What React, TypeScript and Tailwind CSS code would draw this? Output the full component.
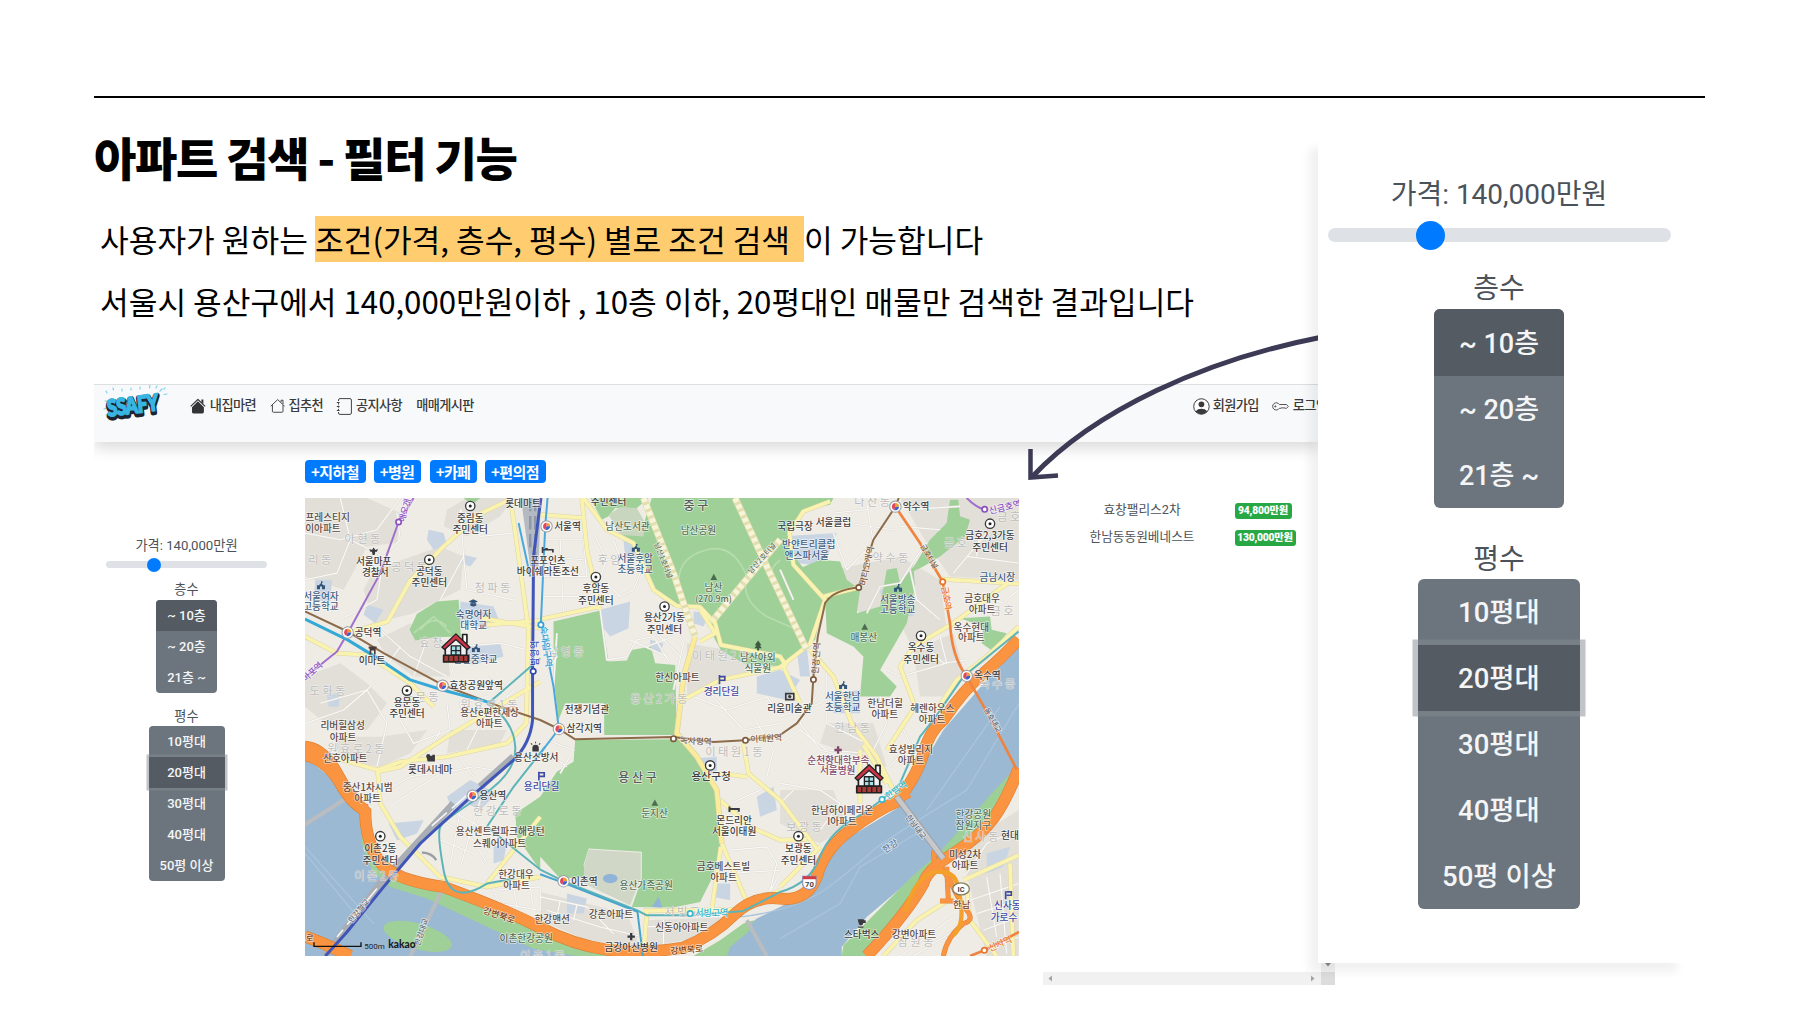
import React from "react";

const KR = "font-['Noto_Sans_CJK_KR',sans-serif]";
const UI = "font-['Roboto','Noto_Sans_CJK_KR',sans-serif]";

/* ---------- filter controls ---------- */

const FLOORS = ["~ 10층", "~ 20층", "21층 ~"];
const SIZES = ["10평대", "20평대", "30평대", "40평대", "50평 이상"];

function SmallFilter() {
  return (
    <div className={`${UI} flex w-[186px] flex-col items-center text-[13.2px] text-[#4b5259]`}>
      <div className="mt-[76px] h-5 leading-5">가격: 140,000만원</div>
      <div className="relative mt-[5px] h-[7px] w-[161px] rounded-full bg-[#dee2e6]">
        <div className="absolute -top-[3.5px] left-[41px] size-[14px] rounded-full bg-[#007bff]" />
      </div>
      <div className="mt-[12px] h-5 leading-5">층수</div>
      <div className="flex h-[93px] w-[61px] flex-col overflow-hidden rounded-[4px] bg-[#6c757d] text-[13px] font-medium text-[#f4f5f6]">
        {FLOORS.map((t, i) => (
          <div key={t} className={`flex flex-1 items-center justify-center ${i === 0 ? "bg-[#545b62]" : ""}`}>{t}</div>
        ))}
      </div>
      <div className="mt-[14px] h-5 leading-5">평수</div>
      <div className="-mt-[1px] flex h-[155px] w-[76px] flex-col rounded-[4px] bg-[#6c757d] text-[13px] font-medium text-[#f4f5f6]">
        {SIZES.map((t, i) => (
          <div key={t} className={`flex flex-1 items-center justify-center ${i === 1 ? "bg-[#545b62] shadow-[0_0_0_2.5px_rgba(130,138,145,0.5)]" : ""}`}>{t}</div>
        ))}
      </div>
    </div>
  );
}

function LargeFilter() {
  return (
    <div className={`${UI} flex w-[362px] flex-col items-center text-[28px] text-[#4b5259]`}>
      <div className="mt-[36px] h-10 leading-10">가격: 140,000만원</div>
      <div className="relative mt-[13px] h-[14px] w-[343px] rounded-full bg-[#dee2e6]">
        <div className="absolute -top-[7px] left-[88px] size-[29px] rounded-full bg-[#007bff]" />
      </div>
      <div className="mt-[27px] h-10 leading-10">층수</div>
      <div className="flex h-[199px] w-[130px] flex-col overflow-hidden rounded-[6px] bg-[#6c757d] text-[27px] font-medium text-[#f4f5f6]">
        {FLOORS.map((t, i) => (
          <div key={t} className={`flex items-center justify-center pt-[3px] ${i === 0 ? "h-[67px] bg-[#545b62]" : "h-[66px]"}`}>{t}</div>
        ))}
      </div>
      <div className="mt-[32px] h-10 leading-10">평수</div>
      <div className="-mt-[1px] flex h-[330px] w-[162px] flex-col rounded-[6px] bg-[#6c757d] text-[27.5px] font-medium text-[#f4f5f6]">
        {SIZES.map((t, i) => (
          <div key={t} className={`flex flex-1 items-center justify-center pt-[2px] ${i === 1 ? "bg-[#545b62] shadow-[0_0_0_5.5px_rgba(130,138,145,0.5)]" : ""}`}>{t}</div>
        ))}
      </div>
    </div>
  );
}

/* ---------- navigation bar ---------- */

function SsafyLogo() {
  return (
    <svg width="66" height="36" viewBox="0 0 66 36">
      <g stroke="#7fd3ee" strokeWidth="1.2" strokeLinecap="round">
        <path d="M3 6l1 2M10 3l.6 2M19 4v2M28 3v2M37 2v2M47 0l-.5 3M54 1l-1 2M59 4l-2 2M64 9l-3 .5M2 16h2M1 24l2-1M62 3l-1 1M3 30l2-1" />
      </g>
      <g transform="rotate(-7 33 20)" fontFamily="Lato, sans-serif" fontWeight="900" fontSize="23">
        <text x="4" y="30" textLength="51" lengthAdjust="spacingAndGlyphs" fill="#1d2530" stroke="#1d2530" strokeWidth="5" strokeLinejoin="round">SSAFY</text>
        <text x="4" y="28" textLength="51" lengthAdjust="spacingAndGlyphs" fill="#38b6e3" stroke="#38b6e3" strokeWidth="1.8" strokeLinejoin="round">SSAFY</text>
      </g>
    </svg>
  );
}

const HouseFill = () => (
  <svg width="16" height="16" viewBox="0 0 16 16" fill="#343434">
    <path d="M8 3.300l6 6V14a1.500 1.500 0 0 1-1.500 1.500h-9A1.500 1.500 0 0 1 2 14V9.300z" />
    <path d="M7.300 1.100a1 1 0 0 1 1.400 0l7 6.800-.8.8L8 2.100 1.100 8.700l-.8-.8zM11.500 1.500h2v4.200l-2-2z" />
  </svg>
);
const HouseOutline = () => (
  <svg width="16" height="16" viewBox="0 0 16 16" fill="none" stroke="#444" strokeWidth="1">
    <path d="M2.500 7v6.500a1 1 0 0 0 1 1h9a1 1 0 0 0 1-1V7M.8 8.200L8 1.300l7.200 6.900M11.500 4V2h2v4" />
  </svg>
);
const Journal = () => (
  <svg width="16" height="17" viewBox="0 0 16 17" fill="none" stroke="#444">
    <path d="M2.500 3V2A1.500 1.500 0 0 1 4 .6h10A1.500 1.500 0 0 1 15.400 2v13A1.500 1.500 0 0 1 14 16.400H4A1.500 1.500 0 0 1 2.500 15v-1" />
    <path d="M2.500 4.500v8" strokeDasharray="2 1.200" />
    <path d="M.8 4.500h2.800M.8 8.500h2.800M.8 12.500h2.800" />
  </svg>
);
const Person = () => (
  <svg width="17" height="17" viewBox="0 0 17 17">
    <circle cx="8.500" cy="8.500" r="7.800" fill="#fff" stroke="#3a3a3a" strokeWidth="1" />
    <circle cx="8.500" cy="6.300" r="2.900" fill="#3a3a3a" />
    <path d="M2.800 13.500C4 11.300 6 10.700 8.500 10.700s4.500.6 5.700 2.800A7.600 7.600 0 0 1 8.500 16.200a7.600 7.600 0 0 1-5.700-2.700z" fill="#3a3a3a" />
  </svg>
);
const KeyIcon = () => (
  <svg width="17" height="9" viewBox="0 0 17 9" fill="none" stroke="#555">
    <path d="M7.300 2.500H14.500L16.300 4.500 14.500 6.300H13l-1-.8-1 .8-1-.8-1 .8H7.300A3.600 3.600 0 1 1 7.300 2.500z" />
    <circle cx="3.300" cy="4.400" r=".6" fill="#555" />
  </svg>
);

function NavBar() {
  return (
    <div className={`${UI} flex h-[58px] w-full items-start border-t border-[#dcdee0] bg-[#f8f9fb] text-[13.2px] font-medium tracking-[-0.6px] text-[#3a3a3a] shadow-[0_6px_14px_rgba(0,0,0,0.15)]`}>
      <div className="ml-[9px]"><SsafyLogo /></div>
      <div className="ml-[21px] mt-[11px] flex h-5 w-[66px] items-center gap-[4px] whitespace-nowrap"><HouseFill />내집마련</div>
      <div className="ml-[14px] mt-[11px] flex h-5 w-[53px] items-center gap-[3px] whitespace-nowrap"><HouseOutline />집추천</div>
      <div className="ml-[13px] mt-[11px] flex h-5 w-[67px] items-center gap-[4px] whitespace-nowrap"><Journal />공지사항</div>
      <div className="ml-[14px] mt-[11px] h-5 w-[60px] whitespace-nowrap leading-5">매매게시판</div>
      <div className="ml-[719px] mt-[11px] flex h-5 w-[66px] items-center gap-[3px] whitespace-nowrap"><Person />회원가입</div>
      <div className="ml-[13px] mt-[11px] flex h-5 items-center gap-[4px] whitespace-nowrap"><KeyIcon />로그인</div>
    </div>
  );
}

/* ---------- map ---------- */

const INK = "#3c3c40";
const APT = "#5a4a44";
const SCH = "#3f5d80";
const NAVY = "#3f49a5";
const GRN = "#54705a";

type Label = [number, number, string, string?, number?];

const LABELS: Label[] = [
  [82, 84, "프레스티지", APT], [68, 118, "이아파트", APT],
  [220, 217, "서울마포"], [225, 248, "경찰서"], [387, 245, "공덕동"], [387, 280, "주민센터"],
  [510, 86, "중림동"], [510, 121, "주민센터"], [668, 42, "롯데마트"],
  [62, 320, "서울여자", SCH], [62, 352, "고등학교", SCH],
  [520, 375, "숙명여자", SCH], [520, 407, "대학교", SCH], [525, 510, "선린중학교", SCH],
  [203, 428, "공덕역"], [215, 512, "이마트"], [528, 587, "효창공원앞역"],
  [320, 638, "용문동"], [320, 672, "주민센터"], [568, 668, "용산e편한세상", APT], [567, 700, "아파트", APT],
  [127, 708, "리버힐삼성", APT], [128, 744, "아파트", APT],
  [743, 212, "포포인츠"], [743, 245, "바이쉐라톤조선"], [802, 110, "서울역"],
  [925, 36, "주민센터"], [982, 110, "남산도서관", GRN], [1187, 50, "중 구", "#5a5a5a", 36], [1195, 123, "남산공원", GRN],
  [1005, 208, "서울후암", SCH], [1005, 240, "초등학교", SCH], [887, 298, "후암동"], [887, 332, "주민센터"],
  [1240, 294, "남산", GRN], [1240, 326, "(270.9m)", GRN, 26], [1093, 385, "용산2가동"], [1093, 418, "주민센터"],
  [1373, 503, "남산야외", GRN], [1373, 535, "식물원", GRN], [1132, 562, "한신아파트", APT], [1264, 606, "경리단길", NAVY],
  [860, 660, "전쟁기념관"], [852, 717, "삼각지역"], [1468, 657, "리움미술관"],
  [1848, 50, "약수역"], [1485, 112, "국립극장"], [1600, 100, "서울클럽"], [1526, 165, "반얀트리클럽", SCH], [1520, 199, "앤스파서울", SCH],
  [2070, 138, "금호2,3가동"], [2070, 175, "주민센터"], [2092, 264, "금남시장", SCH],
  [1793, 330, "서울방송", SCH], [1793, 360, "고등학교", SCH], [1691, 444, "매봉산", GRN],
  [2046, 326, "금호대우", APT], [2046, 360, "아파트", APT], [2014, 412, "옥수현대", APT], [2014, 444, "아파트", APT],
  [1863, 474, "옥수동"], [1863, 510, "주민센터"], [2062, 558, "옥수역"],
  [1628, 620, "서울한남", SCH], [1628, 652, "초등학교", SCH], [1755, 640, "한남더힐", APT], [1754, 673, "아파트", APT],
  [1897, 656, "헤렌하우스", APT], [1896, 690, "아파트", APT],
  [135, 805, "산호아파트", APT], [202, 892, "중산1차시범", APT], [202, 925, "아파트", APT], [390, 840, "롯데시네마"],
  [708, 803, "용산소방서"], [578, 917, "용산역"], [724, 890, "용리단길", NAVY],
  [600, 1026, "용산센트럴파크해링턴", APT], [598, 1060, "스퀘어아파트", APT], [240, 1075, "이촌2동"], [240, 1110, "주민센터"],
  [647, 1152, "한강대우", APT], [649, 1185, "아파트", APT], [678, 1344, "이촌한강공원", GRN], [756, 1287, "한강맨션", APT],
  [1233, 861, "용산구청", INK, 32], [1012, 865, "용 산 구", "#5a5a5a", 36], [1063, 971, "둔지산", GRN],
  [1302, 992, "몬드리안"], [1302, 1026, "서울이태원"], [1270, 1129, "금호베스트빌", APT], [1270, 1162, "아파트", APT],
  [852, 1173, "이촌역"], [1038, 1187, "용산가족공원", GRN], [932, 1274, "강촌아파트", APT], [1235, 1268, "서빙고역", "#35b5cc", 27],
  [1145, 1313, "신동아아파트", APT], [993, 1372, "금강아산병원"],
  [1833, 780, "효성빌리지", APT], [1833, 812, "아파트", APT], [1615, 812, "순천향대학부속", "#81476b"], [1613, 842, "서울병원", "#81476b"],
  [1626, 963, "한남하이페리온", APT], [1626, 995, "I아파트", APT], [1495, 1075, "보광동"], [1495, 1110, "주민센터"],
  [2020, 975, "한강공원", GRN], [2020, 1008, "잠원지구", GRN], [2130, 1036, "현대"], [1995, 1093, "미성2차", APT], [1995, 1126, "아파트", APT],
  [1985, 1242, "한남", "#7a4a30", 28], [2122, 1247, "신사동", NAVY], [2112, 1282, "가로수", NAVY],
  [1685, 1332, "스타벅스"], [1842, 1332, "강변아파트", APT],
];

const FAINT: [number, number, string][] = [
  [190, 148, "아현동"], [62, 210, "리동"], [330, 232, "공덕동"], [580, 294, "청파동"], [395, 458, "효창"], [85, 603, "도화동"],
  [930, 210, "후암"], [800, 486, "남영동"], [1265, 498, "이태원2동"], [1080, 626, "용산2가동"], [365, 622, "용문동"], [570, 645, "원효로1동"],
  [1720, 38, "다산동"], [1775, 204, "약수동"], [1970, 160, "금호"], [2110, 365, "금호"], [2095, 582, "옥수동"], [1660, 714, "한남동"], [2130, 82, "금호"],
  [170, 777, "원효로2동"], [595, 963, "한강로동"], [232, 1157, "이촌2동"], [1305, 785, "이태원1동"], [1150, 1264, "서빙고"],
  [1515, 1010, "보광동"], [2045, 1040, "신사동"], [1850, 1355, "잠원동"], [730, 1397, "이촌1동"],
];

const TURNED: [number, number, number, string, string, number][] = [
  [36, 545, -42, "마포역", "#8a4fc0", 26], [316, 50, -75, "애오개역", "#8a4fc0", 26],
  [704, 490, -90, "남영역", "#2f4bb5", 27], [738, 470, 82, "숙대입구역", "#2f9fd8", 27],
  [1090, 212, 68, "남산1호터널", "#6b7355", 22], [1385, 205, -48, "남산2호터널", "#6b7355", 22],
  [1700, 228, -78, "버티고개역", "#7d5a3c", 26], [2115, 52, -14, "신금호역", "#8a4fc0", 27],
  [1888, 200, 60, "금호터널", "#6b5a3c", 22], [1940, 325, 80, "금호역", "#e8742c", 26],
  [1548, 505, -86, "한강진역", "#7d5a3c", 26], [2078, 690, 60, "동호대교", "#5d6a78", 22],
  [597, 1275, 18, "강변북로", "#7a4413", 27], [363, 1325, -72, "한강대교", "#5d6a78", 23], [175, 1262, -50, "한강철교", "#5d6a78", 23],
  [1187, 753, 3, "녹사평역", "#7d5a3c", 26], [1398, 745, -4, "이태원역", "#7d5a3c", 26], [1160, 1378, -5, "강변북로", "#7a4413", 27],
  [1788, 900, -35, "한남역", "#35b5cc", 27], [1848, 1010, 53, "한남대교", "#5d6a78", 23], [1770, 1068, -35, "한강", "#5878a0", 27],
  [2100, 1360, -24, "신사역", "#e8742c", 27], [28, 1343, 8, "로", "#7a4413", 26],
];

const GRAY_BLOCKS = [
  "14,25 200,25 300,70 290,160 200,170 130,300 14,260",
  "220,240 420,170 490,200 480,300 420,330 340,370 220,400 190,300",
  "230,450 330,400 440,460 450,560 340,560 260,500",
  "14,560 120,520 200,580 260,640 200,720 100,720 14,650",
  "500,25 640,25 600,80 500,140 430,110 440,60",
  "1600,240 1800,200 1920,270 1940,420 1830,460 1800,400 1840,300 1700,380 1600,320",
  "1800,25 2156,25 2156,270 1950,260 1880,160",
  "1160,460 1400,500 1440,540 1280,560 1160,620",
  "720,1205 980,1270 1020,1370 860,1350 720,1290",
  "1040,1290 1300,1280 1210,1340 1040,1370",
  "1840,480 1960,430 1990,540 1940,620 1860,620",
  "1580,700 1720,700 1760,830 1560,760",
  "100,740 240,740 380,720 330,790 240,830 120,810",
  "450,720 620,720 600,760 440,790",
  "1980,1070 2156,960 2156,1397 2060,1397",
  "1440,900 1600,900 1640,1010 1560,1060 1440,1000",
];

const BLUE_BLOCKS = [
  "45,270 95,270 90,340 40,330", "200,345 250,360 225,400 190,375", "385,120 430,130 440,165 400,180 380,150",
  "490,195 530,205 510,230 485,220", "480,335 580,350 600,400 560,415 480,400", "470,470 600,460 610,500 520,525 440,500",
  "900,360 990,335 985,415 930,440 905,410", "970,150 1030,160 1020,210 975,205", "1180,365 1230,370 1210,410 1180,400",
  "1370,560 1440,540 1500,570 1460,630 1370,610", "1440,140 1610,130 1570,230 1460,215", "1740,300 1840,290 1840,380 1750,370",
  "1600,610 1680,600 1680,670 1600,670", "1370,920 1420,890 1430,960 1380,980", "1050,450 1090,460 1080,490 1050,480",
  "265,1000 370,990 350,1030 290,1050", "440,920 510,870 590,910 540,960 500,940 460,970", "80,615 120,610 115,650 85,650",
  "1490,480 1520,470 1530,560 1500,560", "800,1210 860,1225 850,1270 800,1270", "1240,1180 1290,1180 1290,1230 1240,1220",
  "1580,330 1640,330 1620,370 1580,370", "2060,1090 2130,1070 2110,1130 2060,1150", "580,1070 620,1060 610,1110 580,1120",
  "1180,805 1250,800 1250,850 1190,860",
];

const GREENS = [
  "490,25 540,25 515,45",
  "328,420 350,372 410,335 475,330 482,440 400,442 345,452",
  "870,25 1045,25 1010,55 945,55 925,80 905,90",
  "1040,70 1055,25 1310,25 1330,80 1370,130 1440,150 1440,25 1600,25 1590,45 1520,60 1475,100 1475,190 1560,300 1570,330 1545,450 1450,530 1330,520 1262,480 1240,440 1232,380 1180,345 1120,350 1078,320 1050,260 1020,180 960,130 1000,130 1030,110",
  "1300,25 1450,25 1450,170 1360,140",
  "1490,240 1560,210 1620,215 1640,270 1680,300 1670,370 1740,350 1760,240 1790,235 1800,280 1840,230 1845,290 1820,400 1740,540 1790,590 1770,620 1680,620 1690,500 1660,470 1580,430 1575,320",
  "1830,250 1890,150 1940,100 1950,30 1975,30 1980,80 2010,90 1995,140 1920,200 1870,230",
  "1980,385 2070,380 2075,420 2120,430 2080,485 2045,460 2050,410",
  "760,395 900,362 925,515 980,512 995,480 1052,470 1065,520 1125,525 1130,735 912,735 912,640 795,640 775,690 760,560",
  "825,750 1140,748 1180,800 1230,860 1258,950 1262,1075 1235,1165 1200,1235 1120,1252 995,1250 1025,1165 1025,1085 865,1075 850,1125 860,1160 780,1165 720,1100 720,1140 650,1040 645,970 720,920 770,845 820,815",
  "180,1000 230,1130 300,1165 420,1195 720,1310 820,1355 980,1397 830,1397 700,1375 540,1300 380,1225 270,1190 215,1140 185,1060",
  "1180,1397 1260,1350 1330,1300 1360,1290 1350,1320 1290,1370 1280,1397",
];

const YELLOW = [
  "M640 25L540 72L430 170L330 272L262 395L142 430", "M634 50L662 250L685 420L678 700L620 760L440 800L300 815L232 840L14 778",
  "M232 840L240 940L300 1040L420 1160L560 1190L720 1160", "M14 440L110 490L200 495L330 580L400 650", "M720 575L440 740L300 830L232 845",
  "M720 75L850 85M845 25L860 180L900 360", "M720 388L900 350M545 385L720 415M560 405L720 392",
  "M850 25L920 120L1000 160L1060 300L1130 348L1200 352L1245 400L1262 465L1440 500L1460 530",
  "M1200 360L1245 430L1200 455", "M1130 640L1260 570L1440 532L1530 462L1575 330L1480 225L1468 130L1510 65L1590 35",
  "M1570 320L1680 292", "M1530 480L1600 560L1655 700L1730 800L1790 920", "M1925 268L2156 282",
  "M2130 275L1960 400L1840 470L1800 530L1845 650L1760 780", "M1680 780L1680 940", "M2156 410L2060 500L1970 570L1910 660",
  "M1260 930L1350 1010L1440 1050L1520 1048", "M1330 760L1345 850L1440 930L1550 1075", "M1030 1262L1320 1258L1440 1200",
  "M1265 1060L1350 1258M1262 1070L1235 1258", "M1040 1265L1030 1397", "M1990 1170L2156 1095", "M2000 1200L2010 1290L2090 1397", "M1960 1220L1850 1290L1750 1397",
  "M1340 860L1260 850", "M720 980L560 1180", "M2130 1120L2140 1397", "M1560 1070L1440 1190", "M1690 765L1760 880", "M1450 530L1500 640",
];

const WHITE = [
  "M14 130L120 150L230 120L300 25", "M120 25L150 150L110 250L14 270", "M150 150L250 200L230 330L120 390", "M250 200L300 150L290 70",
  "M420 330L490 200L480 60L540 140L640 130", "M490 200L500 300L640 330", "M450 560L480 470L600 460L680 480", "M440 560L330 500L240 420",
  "M340 560L380 450M300 470L250 540", "M60 640L200 600L260 700L230 830", "M14 700L130 660L200 600L240 560", "M440 640L450 720L340 760L300 690",
  "M500 700L480 640L560 620M470 790L520 860M380 800L420 720", "M730 150L850 150L860 260L730 260M780 150L790 380M730 200L850 210M730 320L880 320",
  "M880 130L920 210L900 260L960 320L1000 300L1020 250", "M940 150L980 260M900 210L1000 210M900 360L920 510L980 500L1010 450L1060 440L1110 520",
  "M1140 440L1150 460L1120 600M1060 420L1140 500M1040 470L1120 440M990 450L1100 500", "M1180 620L1280 660L1400 620L1440 680L1560 640", "M1210 590L1330 720L1440 700",
  "M1440 240L1480 330M1600 130L1640 240L1720 160L1700 40M1640 100L1780 120M1600 70L1700 60L1720 25M1800 110L1920 120M1820 60L1980 50",
  "M1700 370L1740 290L1800 280L1850 200L1880 160M1830 240L1850 330L1920 390", "M2000 200L2156 220M2040 120L2030 200M1990 300L2110 340L2156 300M1960 250L2060 130",
  "M1920 440L1940 520L1800 560L1760 540M1890 480L1930 520L2000 510", "M1580 540L1580 700L1700 760M1740 620L1760 700L1720 780M1800 700L1830 760L1770 830M1560 600L1500 700L1560 780L1640 800",
  "M1440 760L1500 720L1580 780L1700 790M1360 680L1420 780L1400 860M1440 880L1560 900L1620 940L1560 1020M1440 940L1480 900",
  "M1290 1080L1400 1070L1430 1120L1410 1200M1290 940L1380 900M1280 1150L1440 1140M1320 1200L1400 1220L1440 1150",
  "M280 940L420 850L520 830L640 850M260 900L330 860L400 850M450 960L540 1010L600 1050M440 1000L520 1050L560 1120M420 1050L520 1090M480 960L450 1120M540 930L480 1130",
  "M580 1200L720 1190L720 1260L600 1240zM640 1190L650 1250M690 1190L700 1260M720 1220L860 1250L940 1330M740 1260L900 1310L1030 1340M780 1230L770 1280M830 1245L820 1290M1040 1310L1200 1300M1090 1290L1090 1370",
  "M2010 1230L2156 1180M2030 1270L2156 1230M2050 1320L2156 1280M2080 1370L2156 1340M2060 1160L2090 1340M2100 1150L2120 1390M1800 1397L1960 1280M1840 1397L1980 1310M2000 1150L2060 1060L2156 1020",
  "M760 590L770 430M730 430L770 500L735 560M730 780L800 830M740 750L820 780L780 850M640 560L560 660L500 780M560 560L680 680M620 620L690 560",
];

const ORANGE_ROADS = [
  "M14 770Q70 775 110 850T195 965Q195 1050 235 1110T430 1190Q620 1260 720 1312T920 1378T1150 1372Q1240 1335 1300 1275T1440 1225T1550 1160Q1570 1080 1650 1020T1790 935Q1850 860 1870 790T1930 690Q1990 600 2050 550T2156 448",
  "M14 795Q80 810 120 880T200 960",
  "M14 1338L70 1360L150 1397",
  "M2156 835Q2120 930 2080 985T1960 1090T1870 1180Q1820 1270 1700 1397",
  "M1920 1130L1950 1170Q1975 1230 2000 1260T1990 1300Q1940 1340 1930 1397",
  "M1800 930L1830 915M1900 1080L1905 1140M1900 1085L1930 1105L1955 1080M1940 1130L1945 1230M1920 1232L1960 1232",
];

const CENTERS: [number, number][] = [[510, 49], [387, 210], [320, 602], [887, 262], [1093, 350], [2070, 102], [1863, 438], [240, 1038], [1230, 826], [1495, 1038]];
const STATIONS: [number, number][] = [[142, 428], [427, 587], [739, 110], [1786, 51], [2000, 558], [517, 917], [776, 717], [790, 1173]];
const STOPS: [number, number, string][] = [
  [295, 97, "#8a4fc0"], [699, 544, "#2f4bb5"], [722, 405, "#2f9fd8"], [1676, 293, "#7d5a3c"], [1540, 569, "#7d5a3c"], [2054, 59, "#8a4fc0"],
  [1928, 276, "#e8742c"], [1120, 746, "#7d5a3c"], [1336, 751, "#7d5a3c"], [1170, 1270, "#35b5cc"], [1746, 928, "#35b5cc"], [2053, 1380, "#e8742c"],
];
const SCHOOLS: [number, number][] = [[62, 287], [527, 475], [1007, 175], [1794, 295], [1629, 586]];
const PEAKS: [number, number][] = [[1241, 262], [1694, 411], [1064, 938]];

function Marker({ x, y }: { x: number; y: number }) {
  return (
    <g transform={`translate(${x} ${y})`} strokeLinejoin="round">
      <path d="M20-40h13v26H20z" fill="#fff" stroke="#222" strokeWidth="5" />
      <path d="M-32-6L0-34L32-6V34H-32z" fill="#eff1f4" stroke="#222" strokeWidth="5" />
      <path d="M-42-2L0-42L42-2L34 5L0-25L-34 5z" fill="#cf3347" stroke="#222" strokeWidth="4" />
      <path d="M-14-6H14V22H-14z" fill="#a8e0ea" stroke="#222" strokeWidth="4" />
      <path d="M0-6V22M-14 8H14" stroke="#222" strokeWidth="4" />
      <path d="M-37 22H37V42H-37z" fill="#a83a3a" stroke="#222" strokeWidth="5" />
      <path d="M-22 22V42M-7 22V42M8 22V42M23 22V42" stroke="#33201f" strokeWidth="4" />
    </g>
  );
}

function KakaoMap() {
  return (
    <svg className="block h-[458px] w-[714px]" viewBox="14 25 2143 1372" preserveAspectRatio="none" fontFamily="'Noto Sans CJK KR', sans-serif">
      <rect x="14" y="25" width="2143" height="1372" fill="#efece6" />
      {GRAY_BLOCKS.map((p, i) => <polygon key={i} points={p} fill="#e2dfd8" />)}
      {BLUE_BLOCKS.map((p, i) => <polygon key={i} points={p} fill="#c9d5e2" />)}
      <path d="M14 800L100 870L180 970L190 1080L250 1170L400 1210L560 1280L720 1350L850 1397H14z" fill="#9bb9d3" />
      <path d="M1240 1397L1300 1340L1370 1285L1540 1200L1580 1110L1650 1040L1790 955L1870 820L1930 720L2060 570L2157 470V840L2080 960L1960 1060L1700 1280L1625 1370V1397z" fill="#9bb9d3" />
      <path d="M2150 830L2080 905L2000 995L1920 1085L1840 1155L1770 1225L1680 1315L1630 1365L1625 1397H1720L1830 1260L1900 1150L2000 1070L2090 980z" fill="#9dd096" />
      {GREENS.map((p, i) => <polygon key={i} points={p} fill="#9ed097" />)}
      <ellipse cx="352" cy="1338" rx="106" ry="38" transform="rotate(16 352 1338)" fill="#9ed097" />
      <polygon points="865,1078 1022,1088 1022,1165 990,1245 850,1180 852,1125" fill="#d0d7c6" />
      <polygon points="925,75 960,52 1010,55 1035,100 1030,140 960,135" fill="#c9d6bf" />
      <ellipse cx="930" cy="1165" rx="22" ry="14" fill="#8fb4d8" />
      <path d="M1055 1250l20-30 12 32z" fill="#8fb4d8" />
      <path d="M1320 1280Q1500 1260 1600 1180T1720 1080T2000 900L2157 640M14 1070L220 1300M14 1090L180 1290M1440 1345L1620 1240L1680 1130L1850 1030M1880 960L2100 650" fill="none" stroke="#a9c4dc" strokeWidth="4" />
      <path d="M1135 270Q1140 200 1220 180T1340 260Q1320 330 1400 380L1490 420M1440 210Q1380 260 1440 300M360 420Q400 370 440 410M340 430L400 380L450 430" fill="none" stroke="#b7dcae" strokeWidth="5" />
      {WHITE.map((d, i) => <path key={i} d={d} fill="none" stroke="#dedbd4" strokeWidth="6.500" strokeLinejoin="round" />)}
      {WHITE.map((d, i) => <path key={i} d={d} fill="none" stroke="#faf9f7" strokeWidth="3.500" strokeLinejoin="round" />)}
      <path d="M662 25H722L715 230L690 230z" fill="#b4bac2" />
      <path d="M690 25V180M705 25V200" stroke="#8d97a8" strokeWidth="7" strokeDasharray="40 14" />
      {YELLOW.map((d, i) => <path key={i} d={d} fill="none" stroke="#ddd5a6" strokeWidth="14" strokeLinejoin="round" />)}
      {YELLOW.map((d, i) => <path key={i} d={d} fill="none" stroke="#faf3b0" strokeWidth="11" strokeLinejoin="round" />)}
      <path d="M1185 440L1150 560L1130 730L1190 800L1250 900L1265 1060" fill="none" stroke="#dcd3a0" strokeWidth="17" strokeLinejoin="round" />
      <path d="M1185 440L1150 560L1130 730L1190 800L1250 900L1265 1060" fill="none" stroke="#fbec9c" strokeWidth="13" strokeLinejoin="round" />
      <g fill="none">
        <path d="M1030 25L1120 250L1160 370L1185 440M1305 25L1400 230L1520 480M1440 150L1330 280L1240 390" stroke="#e3deb0" strokeWidth="21" />
        <path d="M1030 25L1120 250L1160 370L1185 440M1305 25L1400 230L1520 480M1440 150L1330 280L1240 390" stroke="#f8f4da" strokeWidth="17" strokeDasharray="13 9" />
        <path d="M14 1003L170 905M430 1190L330 1397M1340 1290L1400 1397" stroke="#b9bcc0" strokeWidth="12" />
        <path d="M460 940L240 1180L75 1397M540 890L640 800" stroke="#a9adb4" strokeWidth="22" />
        <path d="M500 915L380 1020M230 1195L110 1340" stroke="#f5f5f5" strokeWidth="5" strokeDasharray="60 20" />
        {ORANGE_ROADS.map((d, i) => <path key={i} d={d} stroke="#dd8236" strokeWidth={i < 4 ? 36 : 15} />)}
        {ORANGE_ROADS.map((d, i) => <path key={i} d={d} stroke="#fb9440" strokeWidth={i < 4 ? 32 : 12} />)}
        <path d="M1815 1265Q1850 1150 1910 1145T1975 1200Q2000 1300 1960 1335" stroke="#f3a02c" strokeWidth="13" />
        <path d="M1790 920L1930 1105" stroke="#9b9fa5" strokeWidth="20" />
        <path d="M1790 920L1930 1105" stroke="#c6c8cb" strokeWidth="14" />
        <path d="M365 1087Q395 1088 408 1110" stroke="#9b9fa5" strokeWidth="7" />
      </g>
      <g fill="none" strokeLinejoin="round" strokeWidth="6">
        <path d="M340 25L295 97L240 250L142 430L110 485L14 562M2000 25Q2030 55 2054 59" stroke="#a06fcb" />
        <path d="M14 365L142 425L250 490L427 585L600 650L720 690L776 717L825 748L1120 741L1240 756L1335 751L1440 735L1490 700L1535 640L1540 560L1553 440L1575 340Q1600 300 1675 293L1720 150L1786 51L1796 25" stroke="#8c6b4a" />
        <path d="M14 388L142 450L240 510L330 570L427 600L570 638" stroke="#35a9d6" strokeWidth="9" />
        <path d="M720 505L570 635M560 640Q640 690 645 770T540 920T420 1010T430 1140T560 1180L640 1165M735 770L640 890L560 1010L720 1138L790 1173L1010 1260L1040 1275L1180 1275L1330 1262L1440 1205Q1530 1180 1560 1100T1690 970L1750 925L1800 880L1860 740L1900 690L1990 560L2156 425" stroke="#5cb4b8" />
        <path d="M720 1152L790 1178L1012 1265L1028 1397" stroke="#45a5cc" />
        <path d="M722 25L700 200L697 544V690Q690 760 640 810L510 922L360 1060L250 1190L140 1325L75 1397" stroke="#3f55b8" strokeWidth="9" />
        <path d="M742 25L735 110L722 400L760 590L776 717L720 790M655 100L690 260" stroke="#4aa8de" />
        <path d="M1786 51L1860 160L1928 276L1950 400Q1955 500 2000 560L2060 665L2150 838M2053 1380L2157 1325M2053 1380L2010 1397" stroke="#ef8340" strokeWidth="8" />
      </g>

      <g fontSize="34" fill="#bdbcba" stroke="#fff" strokeOpacity=".6" strokeWidth="2.500" paintOrder="stroke" letterSpacing="7" textAnchor="middle">
        {FAINT.map(([x, y, t], i) => <text key={i} x={x} y={y + 12}>{t}</text>)}
      </g>
      <g textAnchor="middle" stroke="#fff" strokeOpacity=".7" strokeWidth="4" paintOrder="stroke" strokeLinejoin="round" fontWeight="500">
        {TURNED.map(([x, y, r, t, c, s], i) => (
          <text key={i} transform={`translate(${x} ${y}) rotate(${r})`} y={s * 0.36} fontSize={s} fill={c}>{t}</text>
        ))}
        {LABELS.map(([x, y, t, c, s], i) => (
          <text key={i} x={x} y={y + 10} fontSize={s ?? 29} fill={c ?? INK}>{t}</text>
        ))}
      </g>

      {CENTERS.map(([x, y], i) => (
        <g key={i}><circle cx={x} cy={y} r="14" fill="#fff" stroke="#3a3a3e" strokeWidth="4" /><circle cx={x} cy={y} r="4.500" fill="#222" /></g>
      ))}
      {STATIONS.map(([x, y], i) => (
        <g key={i} transform={`translate(${x} ${y})`}>
          <circle r="17" fill="#fff" stroke="#9a9ca2" strokeWidth="3" />
          <path d="M0 0V-11A11 11 0 0 1 11 0z" fill="#f0a030" />
          <path d="M0 0H11A11 11 0 0 1-4 10z" fill="#3b62c8" />
          <path d="M0 0L-4 10A11 11 0 0 1 0-11z" fill="#e0455a" />
        </g>
      ))}
      {STOPS.map(([x, y, c], i) => <circle key={i} cx={x} cy={y} r="8" fill="#fff" stroke={c} strokeWidth="5" />)}
      {SCHOOLS.map(([x, y], i) => (
        <path key={i} transform={`translate(${x} ${y})`} d="M-12 11V-1H-6L0-7V-13L7-10L2-7L6-1H12V11H3V3H-3V11z" fill="#34557a" />
      ))}
      {PEAKS.map(([x, y], i) => <path key={i} d={`M${x} ${y - 10}l10 19h-20z`} fill="#4d6a50" />)}
      <path d="M1374 452l10 14h-5l6 9h-8v7h-6v-7h-8l6-9h-5z" fill="#3d5a40" />
      <path d="M207 178l8 3 5-8 5 8 8-3-3 8h-5l-2 10h-6l-2-10h-5z" fill="#3a3a3e" />
      <path d="M205 470h24v6h-3v18h-5v-12h-8v12h-5v-18h-3z" fill="#4a3a3a" />
      <path d="M505 335l14-7 14 7-14 7zM510 340v7q9 6 18 0v-7" fill="#34557a" />
      <path d="M727 172v18M728 180h30v8M735 177h8" stroke="#3a3a3e" strokeWidth="5" fill="none" />
      <path d="M1288 949v17M1289 957h27v8" stroke="#3a3a3e" strokeWidth="6" fill="none" />
      <path d="M1258 560h16v11h-16M1258 555v28M716 848h16v11h-16M716 845v26M2120 1205h14v10h-14M2117 1203v24" stroke={NAVY} strokeWidth="5" fill="none" />
      <path d="M1457 611h24v18h-24z" fill="none" stroke="#3a3a3e" strokeWidth="5" />
      <circle cx="1469" cy="620" r="5" fill="#3a3a3e" />
      <path d="M378 797h18v-3h8v20h-22z" fill="#3a3a3e" />
      <circle cx="384" cy="798" r="6" fill="#3a3a3e" />
      <path d="M698 783v-9a8 8 0 0 1 16 0v9zM706 755v5M692 760l4 4M720 760l-4 4" fill="#3a3a3e" stroke="#3a3a3e" strokeWidth="3" />
      <path d="M1672 1287h20q8 0 6 8l-8 3q-2 9-8 9t-10-20z" fill="#3a3a3e" transform="translate(-62 0)" opacity="0" />
      <path d="M1673 1287h18v3h6v8h-7q-2 8-8 8t-9-19zM1674 1309h16v3h-16z" fill="#3a3a3e" transform="translate(0 0)" />
      <path d="M813 1339" />
      <path d="M993 1328v22M982 1339h22" stroke="#3a3a3e" strokeWidth="7" transform="translate(-180 0)" opacity="0" />
      <path d="M813 1328" />
      <path d="M993 1328v-0v22M982 1339h22" stroke="#3a3a3e" strokeWidth="7" transform="translate(-0 0)" />
      <path d="M1614 769v22M1603 780h22" stroke="#81476b" strokeWidth="7" />

      <path d="M1508 1158h40v14q4 24-20 26q-24-2-20-26z" fill="#fff" stroke="#7d86b8" strokeWidth="3" />
      <path d="M1508 1158h40v9h-40z" fill="#d23b44" />
      <text x="1528" y="1191" fontSize="23" fontWeight="700" fill="#444" textAnchor="middle" fontFamily="Roboto">70</text>
      <ellipse cx="1983" cy="1196" rx="25" ry="18" fill="#fff" stroke="#85805a" strokeWidth="4" />
      <text x="1983" y="1204" fontSize="22" fontWeight="700" fill="#444" textAnchor="middle" fontFamily="Roboto">IC</text>

      <Marker x={467} y={474} />
      <Marker x={1707} y={866} />

      <path d="M41 1356V1368H182V1356" fill="none" stroke="#111" strokeWidth="4" />
      <text x="192" y="1376" fontSize="24" fill="#222" fontFamily="Roboto">500m</text>
      <text x="264" y="1373" fontSize="31" fontWeight="900" fill="#1a1a1a" fontFamily="Lato" textLength="82" lengthAdjust="spacingAndGlyphs">kakao</text>
    </svg>
  );
}

/* ---------- page ---------- */

const TAGS = [
  { t: "+지하철", w: "w-[61px]" },
  { t: "+병원", w: "w-[47px] ml-[8px]" },
  { t: "+카페", w: "w-[47px] ml-[9px]" },
  { t: "+편의점", w: "w-[61px] ml-[8px]" },
];

export default function App() {
  return (
    <div className="relative h-[1012px] w-[1800px] overflow-hidden bg-white">
      <div className={`${KR} ml-[94px] flex w-[1611px] flex-col pt-24 text-black`}>
        <div className="h-[2px] w-full bg-black" />
        <h1 className="mt-[25px] h-[66px] whitespace-nowrap text-[46px] font-black leading-[66px] tracking-[-1.3px]">아파트 검색 - 필터 기능</h1>
        <p className="ml-[6px] mt-[27px] flex h-[46px] items-center whitespace-pre text-[31.2px] leading-[46px]">
          <span className="w-[215px]">사용자가 원하는</span>
          <span className="w-[489px] bg-[#ffcc70]">조건(가격, 층수, 평수) 별로 조건 검색</span>
          <span>이 가능합니다</span>
        </p>
        <p className="ml-[6px] mt-[16px] h-[46px] whitespace-nowrap text-[31.2px] leading-[46px]">서울시 용산구에서 140,000만원이하 , 10층 이하, 20평대인 매물만 검색한 결과입니다</p>
      </div>

      <div className="ml-[94px] mt-[60px] w-[1224px] overflow-hidden">
        <NavBar />
        <div className="flex h-[543px] items-start">
          <div className="-ml-[0.5px] mt-[18px]"><SmallFilter /></div>
          <div className="ml-[25px] mt-[18px] w-[714px]">
            <div className={`${KR} flex h-[23px] text-[15px] font-bold tracking-[-0.6px] text-white`}>
              {TAGS.map(({ t, w }) => (
                <div key={t} className={`${w} flex items-center justify-center whitespace-nowrap rounded-[4px] bg-[#007bff] leading-none`}>{t}</div>
              ))}
            </div>
            <div className="mt-[15px]"><KakaoMap /></div>
          </div>
          <div className={`${UI} ml-[31px] mt-[54px] flex flex-col text-[12.700px] text-[#4b5259]`}>
            <div className="flex h-[27px] items-center">
              <span className="w-[185px] whitespace-nowrap text-center">효창팰리스2차</span>
              <span className="mt-[2px] flex h-4 w-[57px] items-center justify-center whitespace-nowrap rounded-[3px] bg-[#28a745] text-[10.300px] font-black tracking-[-0.2px] text-white">94,800만원</span>
            </div>
            <div className="flex h-[27px] items-center">
              <span className="w-[185px] whitespace-nowrap text-center">한남동동원베네스트</span>
              <span className="mt-[2px] flex h-4 w-[61px] items-center justify-center whitespace-nowrap rounded-[3px] bg-[#28a745] text-[10.300px] font-black tracking-[-0.2px] text-white">130,000만원</span>
            </div>
          </div>
        </div>
      </div>

      <div className="absolute left-[1321px] top-[960px] flex h-3 w-[14px] justify-center bg-[#f1f1f1]">
        <svg width="8" height="8" viewBox="0 0 8 8"><path d="M1 3h6L4 6.500z" fill="#8a8a8a" /></svg>
      </div>
      <div className="absolute left-[1043px] top-[972px] flex h-[13px] w-[292px] items-center bg-[#f1f1f1]">
        <svg className="ml-[4px]" width="6" height="7" viewBox="0 0 6 7"><path d="M5 .5v6L1.500 3.500z" fill="#a3a3a3" /></svg>
        <svg className="ml-[257px]" width="6" height="7" viewBox="0 0 6 7"><path d="M1 .5v6L4.500 3.500z" fill="#a3a3a3" /></svg>
        <div className="ml-auto h-full w-[14px] bg-[#dcdcdc]" />
      </div>

      <svg className="absolute left-[1020px] top-[330px]" width="310" height="160" viewBox="1020 330 310 160" fill="none" stroke="#3d3a55">
        <path d="M1320 337.500C1205 360 1095 410 1032 477" strokeWidth="5" />
        <path d="M1030.500 449V477.500L1058 475.500" strokeWidth="4.500" />
      </svg>

      <div className="absolute left-[1318px] top-[139px] h-[824px] w-[368px] bg-white shadow-[-9px_9px_9px_rgba(0,0,0,0.06)]">
        <LargeFilter />
      </div>
    </div>
  );
}
